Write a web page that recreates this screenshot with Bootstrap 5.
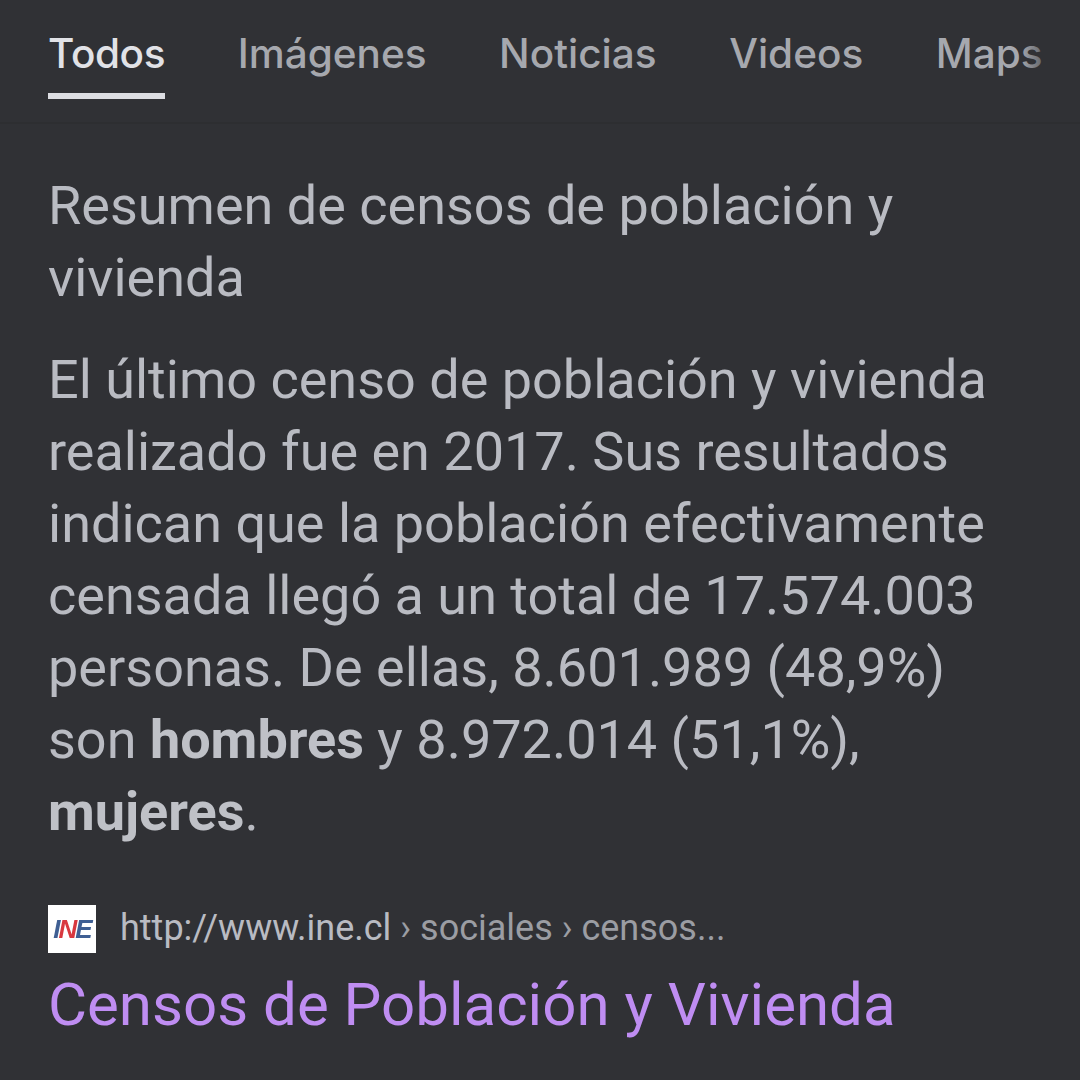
<!DOCTYPE html>
<html lang="es">
<head>
  <meta charset="UTF-8">
  <title>Todos</title>
  <link href="https://cdn.jsdelivr.net/npm/bootstrap@5.3.0/dist/css/bootstrap.min.css" rel="stylesheet">
  <style>
    body { background: #303135; font-family: Roboto, "Liberation Sans", sans-serif; color: #b9bbc2; height: 1080px; overflow: hidden; }
    .tabs-bar { height: 124px; padding: 0 48px; border-bottom: 2px solid #2d2e31; position: relative; white-space: nowrap; overflow: hidden; gap: 72.6px; }
    .tab-link { display: block; height: 99px; padding-top: 29px; font-family: Inter, Roboto, sans-serif; font-size: 40.5px; line-height: 50px; font-weight: 500; color: #a6a8ae; text-decoration: none; }
    .tab-link.active { color: #e1e2e7; border-bottom: 6px solid #dcdde2; letter-spacing: -0.4px; }
    .tabs-fade { position: absolute; top: 0; right: 0; width: 60px; height: 120px; background: linear-gradient(to right, rgba(48,49,53,0), #303135 70%); }
    .summary { padding: 46px 48px 0 48px; }
    .summary-title { font-size: 54px; line-height: 72px; font-weight: 400; margin: 0 0 30px; color: inherit; }
    .summary-text { font-size: 54px; line-height: 72px; margin: 0 0 57px; }
    .summary-text b { font-weight: 700; color: #bfc1c7; }
    .fav { width: 48px; height: 48px; background: #fff; font: italic 700 26px/48px "Liberation Sans", sans-serif; text-align: center; letter-spacing: -2px; color: #3f5f93; }
    .fav span { display: block; filter: blur(0.7px); }
    .fav i { color: #d8383f; }
    .site-url { font-size: 36px; line-height: 46px; margin-bottom: 2px; color: #9b9da3; white-space: nowrap; }
    .site-url span { color: #b9bbc2; }
    .result-link { font-size: 60px; line-height: 76px; color: #bf8df2; text-decoration: none; display: block; margin-top: 14px; }
  </style>
</head>
<body>

<div class="tabs-bar d-flex m-0">
  <a class="tab-link active" href="#">Todos</a>
  <a class="tab-link" href="#">Imágenes</a>
  <a class="tab-link" href="#">Noticias</a>
  <a class="tab-link" href="#">Videos</a>
  <a class="tab-link" href="#">Maps</a>
  <div class="tabs-fade"></div>
</div>

<div class="summary">
  <h1 class="summary-title">Resumen de censos de población y vivienda</h1>
  <p class="summary-text">El último censo de población y vivienda realizado fue en 2017. Sus resultados indican que la población efectivamente censada llegó a un total de 17.574.003 personas. De ellas, 8.601.989 (48,9%) son <b>hombres</b> y 8.972.014 (51,1%), <b>mujeres</b>.</p>

  <div class="d-flex align-items-center gap-4">
    <div class="fav"><span>I<i>N</i>E</span></div>
    <div class="site-url"><span>http://www.ine.cl</span> › sociales › censos...</div>
  </div>
  <a class="result-link" href="#">Censos de Población y Vivienda</a>
</div>

</body>
</html>
